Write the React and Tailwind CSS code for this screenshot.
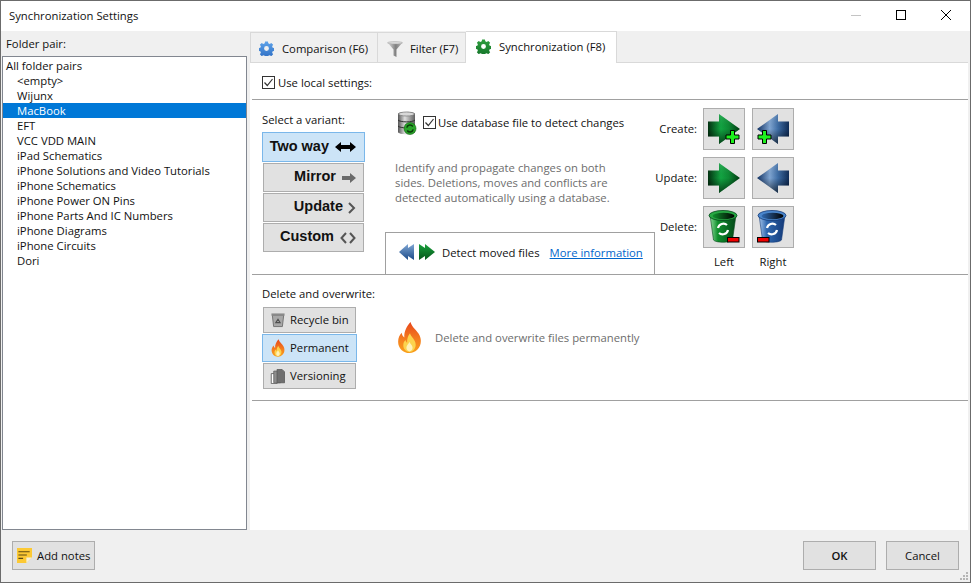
import React from 'react';

const folderPairs = [
  '<empty>',
  'Wijunx',
  'MacBook',
  'EFT',
  'VCC VDD MAIN',
  'iPad Schematics',
  'iPhone Solutions and Video Tutorials',
  'iPhone Schematics',
  'iPhone Power ON Pins',
  'iPhone Parts And IC Numbers',
  'iPhone Diagrams',
  'iPhone Circuits',
  'Dori',
];

const Gear = ({ id, from, to, className }) => (
  <svg viewBox="0 0 16 16" className={className}>
    <defs>
      <linearGradient id={id} x1="0" y1="0" x2="0" y2="1">
        <stop offset="0" stopColor={from} />
        <stop offset="1" stopColor={to} />
      </linearGradient>
    </defs>
    <path
      fill={`url(#${id})`}
      fillRule="evenodd"
      d="M6.5 0.5h3l.4 2 1.5.6 1.7-1.1 2 2-1.1 1.7.6 1.5 1.9.4v3l-1.9.4-.6 1.5 1.1 1.7-2 2-1.7-1.1-1.5.6-.4 1.9h-3l-.4-1.9-1.5-.6-1.7 1.1-2-2 1.1-1.7-.6-1.5-1.9-.4v-3l1.9-.4.6-1.5-1.1-1.7 2-2 1.7 1.1 1.500-.6zM8 5.4a2.6 2.6 0 1 0 0 5.2 2.6 2.6 0 0 0 0-5.2z"
    />
  </svg>
);

const Funnel = () => (
  <svg viewBox="0 0 16 16" className="h-4 w-4">
    <defs>
      <linearGradient id="funnelFill" x1="0" y1="0" x2="1" y2="0">
        <stop offset="0" stopColor="#e2e2e2" />
        <stop offset="0.55" stopColor="#7f7f7f" />
        <stop offset="1" stopColor="#bcbcbc" />
      </linearGradient>
    </defs>
    <path fill="url(#funnelFill)" d="M0.5 1.500h15L9.500 8.500V16l-3-1.500v-6z" />
    <ellipse cx="8" cy="1.800" rx="7.500" ry="1.200" fill="#dcdcdc" stroke="#a0a0a0" strokeWidth="0.5" />
  </svg>
);

const Database = () => (
  <svg viewBox="0 0 20 24" className="h-6 w-5">
    <defs>
      <linearGradient id="dbFill" x1="0" y1="0" x2="1" y2="0">
        <stop offset="0" stopColor="#555555" />
        <stop offset="0.4" stopColor="#dedede" />
        <stop offset="1" stopColor="#5f5f5f" />
      </linearGradient>
    </defs>
    <path fill="url(#dbFill)" d="M1 3c0-3 17-3 17 0v18c0 3-17 3-17 0z" />
    <ellipse cx="9.500" cy="3" rx="8" ry="2" fill="#d8d8d8" stroke="#666666" strokeWidth="0.6" />
    <path fill="none" stroke="#2f2f2f" d="M1 9c2 2.500 15 2.500 17 0M1 15c2 2.500 15 2.500 17 0" />
    <circle cx="13" cy="17.500" r="6" fill="#2aa52a" stroke="#0f5f0f" strokeWidth="0.6" />
    <path fill="none" stroke="#0b3f0b" strokeWidth="1.500" d="M9.800 16.700a3.300 3.300 0 0 1 6-1.200M16.200 18.300a3.300 3.300 0 0 1-6 1.200" />
  </svg>
);

const Flame = ({ className }) => (
  <svg viewBox="0 0 24 30" className={className}>
    <defs>
      <linearGradient id="flameOuter" x1="0" y1="0" x2="0" y2="1">
        <stop offset="0" stopColor="#e8471c" />
        <stop offset="0.6" stopColor="#f5821f" />
        <stop offset="1" stopColor="#f9a01b" />
      </linearGradient>
    </defs>
    <path
      fill="url(#flameOuter)"
      d="M13 0c1 5 6.500 8 8.800 13 .6 1.400 1.200 3 1.200 5.500C23 25 18 30 12 30S1 25.500 1 19c0-3.500 1.500-6.500 3.500-8.500.2 2 1 3.500 2.500 4.500C6.500 9 9.500 4 13 0z"
    />
    <path
      fill="#fcd34d"
      d="M12.500 11c.5 3.500 5.500 6 5.500 11 0 4-2.800 7-6 7s-6-2.800-6-6.500c0-2.300 1-4 2.200-5 .2 1.200.7 2 1.500 2.500-.2-3.300.8-6.500 2.800-9z"
    />
    <path fill="#fff1b8" d="M12 19c.3 2 3 3 3 6 0 2-1.400 3.500-3 3.500S9 27 9 25c0-2.500 2-3.500 3-6z" />
  </svg>
);

const BigArrow = ({ color, dir, plus }) => {
  const id = `arrow-${color}-${dir}-${plus ? 'p' : 'n'}`;
  const shadeId = `${id}-shade`;
  const stops =
    color === 'green'
      ? ['#00300f', '#12a542', '#0d8a34', '#003a12']
      : ['#0f2c57', '#7fa5d2', '#3f6ea6', '#0f2f60'];
  const shape = dir === 'right' ? 'M0 8.500h11V1l21 15-21 15v-7.500H0z' : 'M32 8.500H21V1L0 16l21 15v-7.500h11z';
  return (
    <svg viewBox="0 0 32 32" className="h-8 w-8">
      <defs>
        <linearGradient id={id} x1="0" y1="0" x2="1" y2="0">
          <stop offset="0" stopColor={dir === 'right' ? stops[0] : stops[3]} />
          <stop offset="0.4" stopColor={stops[1]} />
          <stop offset="0.65" stopColor={stops[2]} />
          <stop offset="1" stopColor={dir === 'right' ? stops[3] : stops[0]} />
        </linearGradient>
        <linearGradient id={shadeId} x1="0" y1="0" x2="0" y2="1">
          <stop offset="0" stopColor="#ffffff" stopOpacity="0.12" />
          <stop offset="0.5" stopColor="#000000" stopOpacity="0" />
          <stop offset="1" stopColor="#000000" stopOpacity="0.6" />
        </linearGradient>
      </defs>
      <path fill={`url(#${id})`} d={shape} />
      <path fill={`url(#${shadeId})`} d={shape} />
      {plus && (
        <path
          fill="#1cf01c"
          stroke="#000000"
          strokeWidth="1"
          transform={dir === 'right' ? 'translate(17.500 17)' : 'translate(0.500 17)'}
          d="M5 0.500h4v4.500h4.500v4H9v4.500H5V9H0.500V5H5z"
        />
      )}
    </svg>
  );
};

const Bin = ({ color }) => {
  const id = `bin-${color}`;
  const c =
    color === 'green'
      ? { light: '#8fdc9c', mid: '#0f8f2c', dark: '#05481a', rim: '#27a843' }
      : { light: '#a8c6ea', mid: '#2f68b0', dark: '#143a78', rim: '#4a86cc' };
  return (
    <svg viewBox="0 0 32 36" className="h-9 w-8">
      <defs>
        <linearGradient id={id} x1="0" y1="0" x2="1" y2="0">
          <stop offset="0" stopColor={c.light} />
          <stop offset="0.3" stopColor={c.mid} />
          <stop offset="1" stopColor={c.dark} />
        </linearGradient>
        <linearGradient id={`${id}-in`} x1="0" y1="0" x2="1" y2="0">
          <stop offset="0" stopColor={c.mid} />
          <stop offset="1" stopColor="#000000" />
        </linearGradient>
      </defs>
      <path fill={`url(#${id})`} stroke={c.dark} strokeWidth="0.6" d="M2 6l3.500 25c2 3 17 3 19 0L28 6z" />
      <ellipse cx="15" cy="6.500" rx="14" ry="5" fill={c.rim} stroke={c.dark} strokeWidth="0.8" />
      <ellipse cx="15.500" cy="7" rx="11" ry="3.300" fill={`url(#${id}-in)`} />
      <path fill="none" stroke="#ffffff" strokeWidth="2.200" d="M10 19a5.500 5.500 0 0 1 9-3M20 21a5.500 5.500 0 0 1-9 3" />
      <rect
        x={color === 'green' ? 19.500 : 0.500}
        y="28.500"
        width="11.500"
        height="4.500"
        fill="#f00000"
        stroke="#000000"
      />
    </svg>
  );
};

const MiniArrows = () => (
  <svg viewBox="0 0 36 18" className="h-[18px] w-9">
    <defs>
      <linearGradient id="miniBlue" x1="0" y1="0" x2="0" y2="1">
        <stop offset="0" stopColor="#7fa6d4" />
        <stop offset="1" stopColor="#1b4a88" />
      </linearGradient>
      <linearGradient id="miniGreen" x1="0" y1="0" x2="0" y2="1">
        <stop offset="0" stopColor="#18a03c" />
        <stop offset="1" stopColor="#06561a" />
      </linearGradient>
    </defs>
    <path fill="url(#miniBlue)" d="M0 9l9-8v4l6-4v16l-6-4v4z" />
    <path fill="url(#miniGreen)" d="M20 1l6 4V1l10 8-10 8v-4l-6 4z" />
  </svg>
);

const GrayBin = () => (
  <svg viewBox="0 0 16 18" className="h-[16px] w-[14px]">
    <path fill="#a8a8a8" stroke="#6b6b6b" d="M1.500 3.500l1.500 13h10l1.500-13z" />
    <rect x="0.500" y="1.500" width="15" height="2.500" fill="#8a8a8a" />
    <path fill="none" stroke="#4f4f4f" strokeWidth="1.200" d="M5.500 12l2.500-4 2.500 4z" />
  </svg>
);

const Pages = () => (
  <svg viewBox="0 0 18 18" className="h-[15px] w-[15px]">
    <path fill="#ffffff" stroke="#555555" d="M1.500 5.500h7v12h-7z" />
    <path fill="#8d8d8d" stroke="#666666" d="M4.500 2.500h6l2 2v12h-8z" />
    <path fill="#6f6f6f" stroke="#5a5a5a" d="M8.500 0.500h6l3 3v13h-9z" />
  </svg>
);

const Check = ({ className = '' }) => (
  <span className={`flex h-[13px] w-[13px] shrink-0 items-center justify-center border border-[#333333] bg-white ${className}`}>
    <svg viewBox="0 0 11 11" className="h-[11px] w-[11px]">
      <path fill="none" stroke="#333333" strokeWidth="1.200" d="M1.500 5.500l2.800 3 5.200-6.500" />
    </svg>
  </span>
);

const VariantButton = ({ label, active, gap = 'gap-[6px]', children }) => (
  <div
    className={`flex items-center justify-end border font-['Liberation_Sans',sans-serif] text-[14.5px] font-bold text-[#111111] ${gap} ${
      active
        ? 'h-[30px] w-[103px] border-[#7ab7ea] bg-[#cce4f7] pr-[8px]'
        : 'mx-px h-[29px] w-[101px] border-[#adadad] bg-[#e1e1e1] pr-[7px]'
    }`}
  >
    <span className="pb-[2px]">{label}</span>
    {children}
  </div>
);

const DeleteButton = ({ label, active, children }) => (
  <div
    className={`flex items-center whitespace-nowrap border ${
      active
        ? 'h-[28px] w-[95px] border-[#7ab7ea] bg-[#cce4f7] pl-[5px]'
        : 'mx-px h-[26px] w-[93px] border-[#adadad] bg-[#e1e1e1] pl-[4px]'
    }`}
  >
    <span className="flex w-[19px] shrink-0 justify-center">{children}</span>
    <span className="ml-[3px] pb-[2px]">{label}</span>
  </div>
);

const ActionButton = ({ children }) => (
  <div className="flex h-[42px] w-[42px] items-center justify-center border border-[#adadad] bg-[#e1e1e1]">
    {children}
  </div>
);

const Row = ({ label, children }) => (
  <div className="flex items-center">
    <span className="w-[47px] pb-[2px] text-right">{label}</span>
    <div className="ml-[6px] flex gap-[7px]">{children}</div>
  </div>
);

export default function App() {
  return (
    <div className="flex h-[583px] w-[971px] flex-col border border-[#6b6b6b] bg-[#f0f0f0] font-['Open_Sans',sans-serif] text-[11.3px] leading-[15px] text-[#111111]">
      <div className="flex h-[30px] shrink-0 items-center justify-between bg-white pb-[2px] pl-[8px]">
        <span>Synchronization Settings</span>
        <div className="flex items-center">
          <span className="h-px w-[10px] bg-[#c4c4c4]" />
          <span className="ml-[35px] h-[10px] w-[10px] border border-black" />
          <svg viewBox="0 0 10 10" className="ml-[35px] mr-[19px] h-[10px] w-[10px]">
            <path stroke="#000000" strokeWidth="1" d="M0 0l10 10M10 0L0 10" />
          </svg>
        </div>
      </div>

      <div className="flex min-h-0 flex-1">
        <div className="flex w-[249px] shrink-0 flex-col">
          <div className="flex h-[25px] shrink-0 items-center pl-[5px]">Folder pair:</div>
          <div className="ml-px h-[475px] w-[245px] border border-[#828790] bg-white pt-px">
            <div className="flex h-[15px] items-center pl-[3px]">All folder pairs</div>
            {folderPairs.map((name) => (
              <div
                key={name}
                className={`flex h-[15px] items-center pl-[14px] ${name === 'MacBook' ? 'bg-[#0078d7] text-white' : ''}`}
              >
                {name}
              </div>
            ))}
          </div>
        </div>

        <div className="flex min-w-0 flex-1 flex-col pr-[2px]">
          <div className="flex h-[32px] shrink-0 items-end">
            <div className="flex h-[31px] w-[128px] items-center gap-[8px] border border-[#d9d9d9] bg-[#f0f0f0] pl-[8px] pt-[2px]">
              <Gear id="gearBlue" from="#5ea3ea" to="#2f6fc4" className="h-[15px] w-[15px]" />
              <span>Comparison (F6)</span>
            </div>
            <div className="flex h-[31px] w-[88px] items-center gap-[7px] border border-l-0 border-[#d9d9d9] bg-[#f0f0f0] pl-[9px] pt-[2px]">
              <Funnel />
              <span>Filter (F7)</span>
            </div>
            <div className="flex h-[32px] w-[151px] items-center gap-[8px] border border-b-0 border-l-0 border-[#d9d9d9] bg-white pb-[2px] pl-[10px]">
              <Gear id="gearGreen" from="#2f9e3f" to="#14752a" className="h-[15px] w-[15px]" />
              <span>Synchronization (F8)</span>
            </div>
            <div className="h-px flex-1 bg-[#d9d9d9]" />
          </div>

          <div className="flex min-h-0 flex-1 flex-col bg-white pl-[2px]">
            <div className="flex h-[37px] shrink-0 items-center gap-[3px] border-b border-[#a0a0a0] pl-[10px] pt-[3px]">
              <Check />
              <span>Use local settings:</span>
            </div>

            <div className="flex h-[175px] shrink-0 border-b border-[#a0a0a0]">
              <div className="w-[133px] shrink-0 pl-[10px] pt-[12px]">
                <div className="h-[20px]">Select a variant:</div>
                <div className="flex w-[103px] flex-col gap-px">
                  <VariantButton label="Two way" active>
                    <svg viewBox="0 0 21 10" className="h-[10px] w-[21px]">
                      <path fill="#000000" d="M0 5l6-5v3h9V0l6 5-6 5V7H6v3z" />
                    </svg>
                  </VariantButton>
                  <VariantButton label="Mirror">
                    <svg viewBox="0 0 14 10" className="h-[10px] w-[14px]">
                      <path fill="#6a6a6a" d="M0 3h8V0l6 5-6 5V7H0z" />
                    </svg>
                  </VariantButton>
                  <VariantButton label="Update" gap="gap-[5px]">
                    <svg viewBox="0 0 8 12" className="h-3 w-2">
                      <path fill="none" stroke="#555555" strokeWidth="2" d="M1 1l5 5-5 5" />
                    </svg>
                  </VariantButton>
                  <VariantButton label="Custom">
                    <svg viewBox="0 0 16 12" className="h-3 w-4">
                      <path fill="none" stroke="#555555" strokeWidth="2" d="M6 1L1.500 6 6 11M10 1l4.500 5L10 11" />
                    </svg>
                  </VariantButton>
                </div>
              </div>

              <div className="flex w-[270px] shrink-0 flex-col">
                <div className="flex h-[36px] items-start pl-[12px] pt-[11px]">
                  <Database />
                  <Check className="ml-[6px] mt-[5px]" />
                  <span className="ml-[2px] mt-[4px]">Use database file to detect changes</span>
                </div>
                <p className="ml-[10px] mt-[24px] h-[45px] w-[230px] text-[#6d6d6d]">
                  Identify and propagate changes on both sides. Deletions, moves and conflicts are detected automatically using a database.
                </p>
                <div className="mt-[27px] flex h-[42px] w-[270px] items-center border-l border-r border-t border-[#a0a0a0] pb-[3px] pl-[13px]">
                  <MiniArrows />
                  <span className="ml-[7px]">Detect moved files</span>
                  <span className="ml-[10px] text-[#0066cc] underline">More information</span>
                </div>
              </div>

              <div className="ml-[-5px] flex flex-col gap-[7px] pt-[8px]">
                <Row label="Create:">
                  <ActionButton><BigArrow color="green" dir="right" plus /></ActionButton>
                  <ActionButton><BigArrow color="blue" dir="left" plus /></ActionButton>
                </Row>
                <Row label="Update:">
                  <ActionButton><BigArrow color="green" dir="right" /></ActionButton>
                  <ActionButton><BigArrow color="blue" dir="left" /></ActionButton>
                </Row>
                <Row label="Delete:">
                  <ActionButton><Bin color="green" /></ActionButton>
                  <ActionButton><Bin color="blue" /></ActionButton>
                </Row>
                <div className="ml-[53px] mt-[-1px] flex gap-[7px]">
                  <span className="w-[42px] text-center">Left</span>
                  <span className="w-[42px] text-center">Right</span>
                </div>
              </div>
            </div>

            <div className="flex h-[126px] shrink-0 border-b border-[#a0a0a0]">
              <div className="w-[133px] shrink-0 pl-[10px] pt-[11px]">
                <div className="h-[21px]">Delete and overwrite:</div>
                <div className="flex flex-col gap-px">
                  <DeleteButton label="Recycle bin"><GrayBin /></DeleteButton>
                  <DeleteButton label="Permanent" active><Flame className="h-[18px] w-[14px]" /></DeleteButton>
                  <DeleteButton label="Versioning"><Pages /></DeleteButton>
                </div>
              </div>
              <div className="flex items-center pl-[12px]">
                <Flame className="h-[31px] w-[25px]" />
                <span className="ml-[13px] text-[#6d6d6d]">Delete and overwrite files permanently</span>
              </div>
            </div>
          </div>
        </div>
      </div>

      <div className="relative flex h-[52px] shrink-0 items-start justify-between pl-[11px] pr-[11px] pt-[11px]">
        <div className="flex h-[29px] w-[83px] items-center gap-[5px] border border-[#adadad] bg-[#e1e1e1] pl-[4px]">
          <svg viewBox="0 0 16 16" className="h-[15px] w-[15px]">
            <path fill="#fcc934" d="M0 0h16v10l-6 6H0z" />
            <path fill="#f7f0d8" d="M16 10l-6 6v-6z" />
            <path stroke="#5c4a12" strokeWidth="1.200" d="M1.500 4h12M1.500 7.500h9M1.500 11h5" />
          </svg>
          <span>Add notes</span>
        </div>
        <div className="flex gap-[10px]">
          <div className="flex h-[29px] w-[73px] items-center justify-center border border-[#adadad] bg-[#e1e1e1] font-semibold">OK</div>
          <div className="flex h-[29px] w-[73px] items-center justify-center border border-[#adadad] bg-[#e1e1e1]">Cancel</div>
        </div>
        <svg viewBox="0 0 10 10" className="absolute bottom-[1px] right-[1px] h-[10px] w-[10px]">
          <path fill="#b5b5b5" d="M7 1h2v2H7zM4 4h2v2H4zM7 4h2v2H7zM1 7h2v2H1zM4 7h2v2H4zM7 7h2v2H7z" />
        </svg>
      </div>
    </div>
  );
}
